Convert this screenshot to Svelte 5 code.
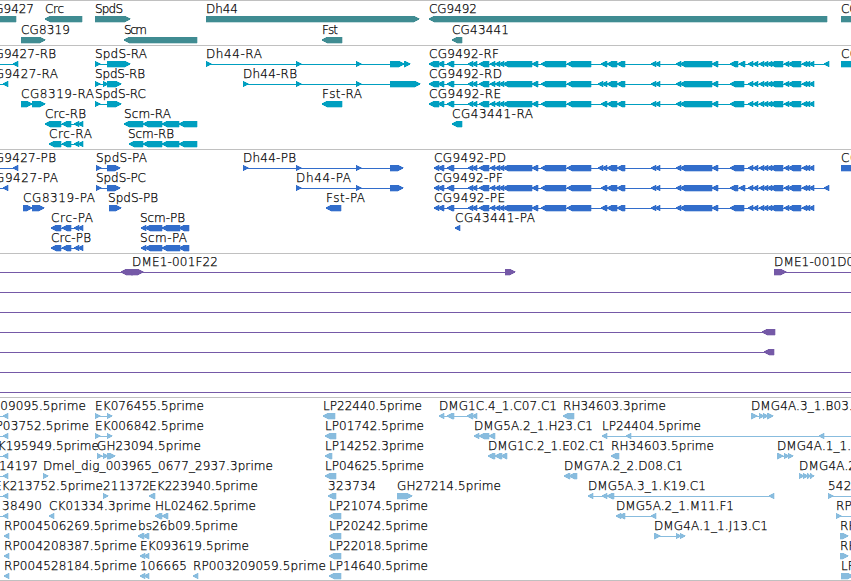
<script>
  /**
   * A feature is [label, labelStart, labelEnd, strand, blocks].
   * A block is [start, end] or [start, end, strand].
   */
  const WIDTH = 851;

  const head = [[429, 439], [438, 444], [447, 454]];
  const codingHead = [[434, 439], [438, 444], [447, 454]];
  const middle = [
    [468, 473], [472, 477], [479, 489], [490, 495], [495, 500], [499, 504],
    [503, 532], [532, 538], [541, 566], [567, 591],
  ];
  const shortSplice = [[601, 607], [607, 617], [617, 625]];
  const longSplice = [[598, 603], [602, 607], [607, 617], [617, 625]];
  const right = [[651, 656], [655, 660], [676, 681], [680, 712], [712, 718]];
  const tail = [
    [748, 753], [753, 758], [759, 764], [763, 768], [767, 772], [770, 783],
    [784, 789], [788, 801], [802, 807], [805, 810], [809, 814],
  ];
  const splitTail = [...right, [730, 738], [739, 745], ...tail, [824, 829]];
  const joinedTail = [...right, [730, 744], ...tail];

  const crc = [[62, 71], [74, 79], [78, 83]];
  const scm = [[143, 162], [162, 179], [179, 197]];
  const scmCoding = [[141, 146], [145, 162], [162, 180], [179, 189]];
  const edge = [[-30, -25], [3, 8]];

  const tracks = [
    {
      name: "genes",
      rows: [
        [
          ["CG9427", -14, 34, -1, [[-30, 16]]],
          ["Crc", 45, 64, -1, [[45, 82]]],
          ["SpdS", 95, 123, 1, [[95, 130]]],
          ["Dh44", 206, 238, 1, [[206, 419]]],
          ["CG9492", 429, 477, -1, [[429, 827]]],
          ["CG9493", 841, 889, 1, [[841, 900]]],
        ],
        [
          ["CG8319", 21, 70, 1, [[21, 45]]],
          ["Scm", 124, 147, -1, [[124, 197]]],
          ["Fst", 322, 338, -1, [[322, 342]]],
          ["CG43441", 452, 509, -1, [[452, 462]]],
        ],
      ],
    },
    {
      name: "transcripts",
      rows: [
        [
          ["CG9427-RB", -14, 56, -1, [[-30, -25], [13, 18]]],
          ["SpdS-RA", 95, 147, 1, [[95, 100], [107, 130]]],
          ["Dh44-RA", 206, 262, 1, [[206, 211], [296, 301], [356, 361], [390, 404], [404, 410]]],
          ["CG9492-RF", 429, 499, -1, [...head, ...middle, ...shortSplice, ...splitTail]],
          ["CG9493-RA", 841, 913, 1, [[841, 900]]],
        ],
        [
          ["CG9427-RA", -14, 58, -1, edge],
          ["SpdS-RB", 95, 145, 1, [[95, 100], [103, 108], [107, 121]]],
          ["Dh44-RB", 243, 297, 1, [[243, 248], [296, 301], [356, 361], [390, 420]]],
          ["CG9492-RD", 429, 502, -1, [...head, ...middle, ...longSplice, ...joinedTail]],
        ],
        [
          ["CG8319-RA", 21, 94, 1, [[21, 32], [32, 45]]],
          ["SpdS-RC", 95, 146, 1, [[95, 100], [107, 121]]],
          ["Fst-RA", 322, 362, -1, [[322, 342]]],
          ["CG9492-RE", 429, 501, -1, [...head, ...middle, ...shortSplice, ...joinedTail]],
        ],
        [
          ["Crc-RB", 45, 86, -1, [[45, 61], ...crc]],
          ["Scm-RA", 124, 171, -1, [[124, 143], ...scm]],
          ["CG43441-RA", 452, 533, -1, [[452, 462]]],
        ],
        [
          ["Crc-RA", 49, 92, -1, [[49, 61], ...crc]],
          ["Scm-RB", 128, 174, -1, [[129, 143], ...scm]],
        ],
      ],
    },
    {
      name: "proteins",
      rows: [
        [
          ["CG9427-PB", -14, 56, -1, [[-30, -25], [13, 18]]],
          ["SpdS-PA", 96, 147, 1, [[96, 101], [107, 120]]],
          ["Dh44-PB", 243, 296, 1, [[243, 248], [296, 301], [356, 361], [390, 403]]],
          ["CG9492-PD", 434, 506, -1, [...codingHead, ...middle, ...longSplice, ...joinedTail]],
          ["CG9493-PA", 841, 913, 1, [[841, 900]]],
        ],
        [
          ["CG9427-PA", -14, 58, -1, edge],
          ["SpdS-PC", 96, 146, 1, [[96, 101], [107, 120]]],
          ["Dh44-PA", 296, 351, 1, [[296, 301], [356, 361], [390, 403]]],
          ["CG9492-PF", 434, 503, -1, [...codingHead, ...middle, ...shortSplice, ...splitTail]],
        ],
        [
          ["CG8319-PA", 23, 95, 1, [[23, 32], [32, 44]]],
          ["SpdS-PB", 108, 158, 1, [[109, 121]]],
          ["Fst-PA", 326, 365, -1, [[326, 341]]],
          ["CG9492-PE", 434, 505, -1, [...codingHead, ...middle, ...shortSplice, ...joinedTail]],
        ],
        [
          ["Crc-PA", 51, 93, -1, [[51, 61], ...crc]],
          ["Scm-PB", 140, 185, -1, scmCoding],
          ["CG43441-PA", 455, 535, -1, [[455, 460]]],
        ],
        [
          ["Crc-PB", 51, 91, -1, [[51, 61], ...crc]],
          ["Scm-PA", 140, 187, -1, scmCoding],
        ],
      ],
    },
    {
      name: "clones",
      rows: [
        [
          ["DME1-001F22", 132, 218, 1, [[-30, -25], [121, 133, -1], [131, 143], [505, 515]]],
          ["DME1-001D08", 774, 862, 1, [[774, 786], [900, 905]]],
        ],
        [["", 0, 0, 1, [[-30, -25], [900, 905]]]],
        [["", 0, 0, 1, [[-30, -25], [900, 905]]]],
        [["", 0, 0, -1, [[-30, -25], [762, 775]]]],
        [["", 0, 0, -1, [[-30, -25], [764, 774]]]],
        [["", 0, 0, 1, [[-30, -25], [900, 905]]]],
        [["", 0, 0, 1, [[-30, -25], [900, 905]]]],
      ],
    },
    {
      name: "ests",
      rows: [
        [
          ["LP09095.5prime", -14, 86, -1, edge],
          ["EK076455.5prime", 95, 204, 1, [[95, 100], [107, 112]]],
          ["LP22440.5prime", 323, 422, -1, [[323, 335]]],
          ["DMG1C.4_1.C07.C1", 439, 557, -1, [[439, 444], [447, 454], [467, 473], [472, 477]]],
          ["RH34603.3prime", 563, 666, -1, [[563, 574]]],
          ["DMG4A.3_1.B03.C1", 751, 869, 1, [[751, 757], [759, 764], [763, 768], [767, 773]]],
        ],
        [
          ["RP03752.5prime", -13, 89, -1, edge],
          ["EK006842.5prime", 95, 204, 1, [[95, 100], [107, 112]]],
          ["LP01742.5prime", 325, 424, -1, [[325, 336]]],
          ["DMG5A.2_1.H23.C1", 474, 593, -1, [[474, 479], [479, 489], [489, 495]]],
          ["LP24404.5prime", 602, 701, -1, [[602, 607], [626, 631], [819, 824], [900, 905]]],
        ],
        [
          ["EK195949.5prime", -10, 99, -1, edge],
          ["GH23094.5prime", 97, 201, 1, [[97, 102], [103, 108], [107, 115]]],
          ["LP14252.3prime", 325, 424, -1, [[325, 332]]],
          ["DMG1C.2_1.E02.C1", 488, 605, -1, [[488, 495], [495, 502], [501, 507]]],
          ["RH34603.5prime", 611, 714, -1, [[611, 619]]],
          ["DMG4A.1_1.C05.C1", 777, 895, 1, [[777, 783], [784, 789], [788, 793]]],
        ],
        [
          ["14197", -1, 38, -1, edge],
          ["Dmel_dig_003965_0677_2937.3prime", 43, 273, 1, [[43, 48]]],
          ["LP04625.5prime", 325, 424, -1, [[325, 336]]],
          ["DMG7A.2_2.D08.C1", 564, 683, -1, [[564, 570], [569, 577]]],
          ["DMG4A.2_1.F02.C1", 799, 917, 1, [[799, 804], [803, 808], [807, 811], [810, 814]]],
        ],
        [
          ["EK213752.5prime", -6, 103, -1, edge],
          ["211372", 103, 150, 1, [[103, 108]]],
          ["EK223940.5prime", 149, 258, -1, [[149, 155]]],
          ["323734", 328, 376, -1, [[328, 336]]],
          ["GH27214.5prime", 397, 501, 1, [[397, 412]]],
          ["DMG5A.3_1.K19.C1", 588, 706, -1, [[588, 593], [602, 607], [607, 614], [769, 774]]],
          ["542117", 828, 875, 1, [[828, 833], [900, 905]]],
        ],
        [
          ["38490", 2, 42, -1, edge],
          ["CK01334.3prime", 49, 151, -1, [[49, 54]]],
          ["HL02462.5prime", 155, 256, -1, [[155, 162], [162, 168]]],
          ["LP21074.5prime", 329, 428, -1, [[329, 341]]],
          ["DMG5A.2_1.M11.F1", 616, 734, -1, [[616, 621], [619, 625], [651, 656]]],
          ["RP11062.5prime", 836, 938, 1, [[836, 841], [900, 905]]],
        ],
        [
          ["RP004506269.5prime", 4, 137, -1, [[4, 9]]],
          ["bs26b09.5prime", 138, 238, -1, [[138, 144], [143, 149]]],
          ["LP20242.5prime", 329, 428, -1, [[329, 341]]],
          ["DMG4A.1_1.J13.C1", 654, 768, 1, [[654, 660], [676, 681], [680, 685]]],
          ["RH51321.5prime", 840, 943, 1, [[840, 848]]],
        ],
        [
          ["RP004208387.5prime", 4, 137, -1, [[4, 9]]],
          ["EK093619.5prime", 140, 249, -1, [[140, 145], [144, 149]]],
          ["LP22018.5prime", 329, 428, -1, [[329, 341]]],
          ["RH60816.5prime", 840, 943, 1, [[840, 848]]],
        ],
        [
          ["RP004528184.5prime", 4, 137, -1, [[4, 9]]],
          ["106665", 140, 187, -1, [[140, 145], [144, 149]]],
          ["RP003209059.5prime", 193, 326, -1, [[193, 198]]],
          ["LP14640.5prime", 329, 428, -1, [[329, 341]]],
          ["LP05220.5prime", 841, 940, 1, [[841, 853]]],
        ],
      ],
    },
  ];

  // Block outline with a tapered head at the strand end
  function arrow([start, end, own], strand) {
    const dir = own ?? strand;
    const len = Math.min(5, end - start);
    const tip = dir > 0 ? end : start;
    const back = dir > 0 ? start : end;
    const neck = tip - dir * len;
    const bulge = tip - dir * 2;
    return `M${back} 13H${neck}L${bulge} 14.3L${tip} 15.4V16.4L${bulge} 17.7L${neck} 19H${back}Z`;
  }

  function extent(blocks) {
    return `M${blocks[0][0]} 16.5H${blocks[blocks.length - 1][1]}`;
  }
</script>

<main>
  {#each tracks as track}
    <section class="track {track.name}">
      {#each track.rows as row}
        <svg class="row" width={WIDTH}>
          {#each row as [label, x, end, strand, blocks]}
            {#if blocks.length > 1}<path class="intron" d={extent(blocks)} />{/if}
            {#each blocks as block}
              <path class="block" d={arrow(block, strand)} />
            {/each}
            {#if label}
              <text {x} y="10" textLength={end - x}>{label}</text>
            {/if}
          {/each}
        </svg>
      {/each}
    </section>
  {/each}
</main>

<style>
  :global(body) {
    background: #fff;
    overflow: hidden;
  }

  main {
    width: 851px;
    height: 581px;
    box-sizing: border-box;
    overflow: hidden;
    border-bottom: 1px solid #c0c0c0;
  }

  .track {
    box-sizing: border-box;
    height: 104px;
    padding-top: 2px;
    border-top: 1px solid #c0c0c0;
  }

  .row {
    display: block;
    height: 20px;
    overflow: visible;
  }

  .genes {
    height: 45px;
    color: #408c92;
  }

  .genes .row {
    height: 21px;
  }

  .transcripts {
    color: #009fc0;
  }

  .proteins {
    color: #326dcb;
  }

  .clones {
    height: 144px;
    color: #7559a7;
  }

  .ests {
    height: 183px;
    color: #88bcde;
  }

  .block {
    fill: currentColor;
    stroke: currentColor;
    stroke-width: 0.3px;
    shape-rendering: crispEdges;
  }

  .intron {
    fill: none;
    stroke: currentColor;
    stroke-width: 1px;
    shape-rendering: crispEdges;
  }

  text {
    fill: #000;
    stroke: #000;
    stroke-width: 0.25px;
    font-family: "DejaVu Sans Light", "DejaVu Sans", sans-serif;
    font-weight: 200;
    font-size: 12px;
  }
</style>
